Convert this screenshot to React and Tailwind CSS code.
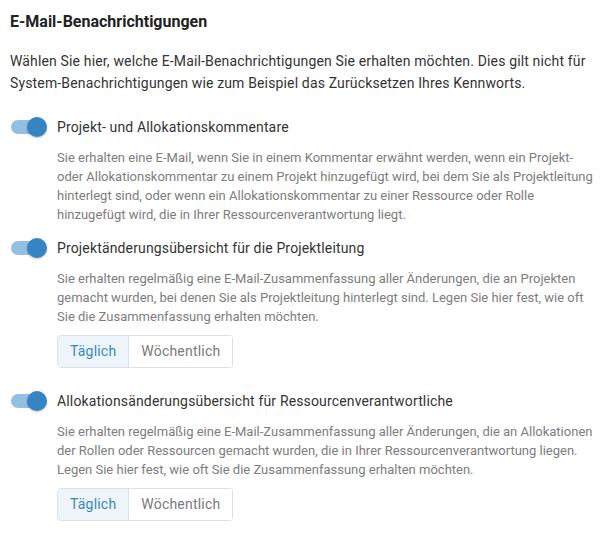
import { useState } from 'react'

function Toggle({ on, onChange }) {
  return (
    <button
      type="button"
      onClick={() => onChange(!on)}
      className="relative ml-[1px] mt-[1px] h-[20px] w-[36px] shrink-0"
    >
      <span className={`absolute left-0 top-[3px] h-[14px] w-[34px] rounded-full ${on ? 'bg-[#93bfe2]' : 'bg-[#cfd4d9]'}`} />
      <span
        className={`absolute top-0 h-[20px] w-[20px] rounded-full shadow-[0_1px_2px_rgba(0,0,0,0.25)] ${on ? 'left-[16px] bg-[#3684c3]' : 'left-0 bg-[#f5f5f5]'}`}
      />
    </button>
  )
}

function Frequency({ value, onChange }) {
  const opts = ['Täglich', 'Wöchentlich']
  return (
    <div className="mt-[9px] mb-[9px] inline-flex h-[33px] rounded-[4px] border border-[#dcdfe3] text-[14px] tracking-[0.2px]">
      {opts.map((o, i) => (
        <button
          key={o}
          type="button"
          onClick={() => onChange(o)}
          className={`px-[12px] ${i > 0 ? 'border-l border-[#dcdfe3]' : ''} ${
            value === o ? 'bg-[#eef5fa] text-[#3a86c4]' : 'bg-white text-[#7a7a7a]'
          }`}
        >
          {o}
        </button>
      ))}
    </div>
  )
}

function Setting({ title, text, withFrequency }) {
  const [on, setOn] = useState(true)
  const [freq, setFreq] = useState('Täglich')
  return (
    <div className="flex gap-[10px]">
      <Toggle on={on} onChange={setOn} />
      <div className="flex-1">
        <div className="text-[14px] leading-[22px] tracking-[0.15px] text-[#333]">{title}</div>
        <p className="mt-[10px] text-[13px] leading-[19px] text-[#7d7d7d]">{text}</p>
        {withFrequency && (
          <div>
            <Frequency value={freq} onChange={setFreq} />
          </div>
        )}
      </div>
    </div>
  )
}

export default function App() {
  return (
    <div className="min-h-screen bg-white px-[10px] pt-[10px] font-['Roboto',sans-serif]">
      <h2 className="text-[16px] font-bold leading-[24px] text-[#222]">E-Mail-Benachrichtigungen</h2>
      <p className="mt-[16px] text-[14px] leading-[22px] tracking-[0.15px] text-[#333]">
        Wählen Sie hier, welche E-Mail-Benachrichtigungen Sie erhalten möchten. Dies gilt nicht für
        System-Benachrichtigungen wie zum Beispiel das Zurücksetzen Ihres Kennworts.
      </p>
      <div className="mt-[22px] flex flex-col gap-[13px]">
        <Setting
          title="Projekt- und Allokationskommentare"
          text="Sie erhalten eine E-Mail, wenn Sie in einem Kommentar erwähnt werden, wenn ein Projekt- oder Allokationskommentar zu einem Projekt hinzugefügt wird, bei dem Sie als Projektleitung hinterlegt sind, oder wenn ein Allokationskommentar zu einer Ressource oder Rolle hinzugefügt wird, die in Ihrer Ressourcenverantwortung liegt."
        />
        <Setting
          title="Projektänderungsübersicht für die Projektleitung"
          text="Sie erhalten regelmäßig eine E-Mail-Zusammenfassung aller Änderungen, die an Projekten gemacht wurden, bei denen Sie als Projektleitung hinterlegt sind. Legen Sie hier fest, wie oft Sie die Zusammenfassung erhalten möchten."
          withFrequency
        />
        <Setting
          title="Allokationsänderungsübersicht für Ressourcenverantwortliche"
          text="Sie erhalten regelmäßig eine E-Mail-Zusammenfassung aller Änderungen, die an Allokationen der Rollen oder Ressourcen gemacht wurden, die in Ihrer Ressourcenverantwortung liegen. Legen Sie hier fest, wie oft Sie die Zusammenfassung erhalten möchten."
          withFrequency
        />
      </div>
    </div>
  )
}
